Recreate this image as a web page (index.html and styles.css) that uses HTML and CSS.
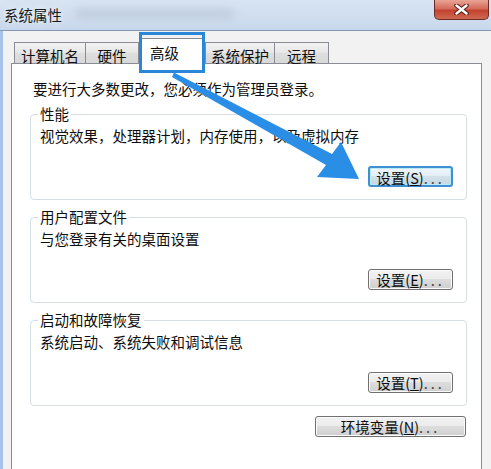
FILE: index.html
```html
<!DOCTYPE html>
<html lang="zh-CN">
<head>
    <meta charset="UTF-8">
    <meta name="viewport" content="width=device-width, initial-scale=1.0">
    <title>系统属性</title>
    <link rel="stylesheet" href="styles.css">
</head>
<body>
    <div class="window">
        <div class="titlebar">
            <span class="title">系统属性</span>
            <span class="title-blur"></span>
            <button class="close" title="关闭">
                <svg width="15" height="11" viewBox="0 0 15 11">
                    <path d="M2.5 1.5 L12.5 9.5 M12.5 1.5 L2.5 9.5" stroke="#5b1d16" stroke-width="4.5" stroke-linecap="round"/>
                    <path d="M2.5 1.5 L12.5 9.5 M12.5 1.5 L2.5 9.5" stroke="#ffffff" stroke-width="2.4" stroke-linecap="round"/>
                </svg>
            </button>
        </div>

        <div class="client">
            <div class="tabs">
                <div class="tab tab-name">计算机名</div>
                <div class="tab tab-hw">硬件</div>
                <div class="tab tab-active">高级<span class="mark"></span></div>
                <div class="tab tab-protect">系统保护</div>
                <div class="tab tab-remote">远程</div>
            </div>

            <div class="panel">
                <p class="intro">要进行大多数更改，您必须作为管理员登录。</p>

                <fieldset class="group">
                    <legend>性能</legend>
                    <p>视觉效果，处理器计划，内存使用，以及虚拟内存</p>
                    <div class="group-actions">
                        <button class="btn btn-default">设置(<u>S</u>)<span class="dots">...</span></button>
                    </div>
                </fieldset>

                <fieldset class="group">
                    <legend>用户配置文件</legend>
                    <p>与您登录有关的桌面设置</p>
                    <div class="group-actions">
                        <button class="btn">设置(<u>E</u>)<span class="dots">...</span></button>
                    </div>
                </fieldset>

                <fieldset class="group">
                    <legend>启动和故障恢复</legend>
                    <p>系统启动、系统失败和调试信息</p>
                    <div class="group-actions">
                        <button class="btn">设置(<u>T</u>)<span class="dots">...</span></button>
                    </div>
                </fieldset>

                <div class="env-row">
                    <button class="btn btn-wide">环境变量(<u>N</u>)<span class="dots">...</span></button>
                </div>
            </div>
        </div>

        <!-- arrow drawn over the dialog -->
        <svg class="arrow" width="491" height="469" viewBox="0 0 491 469">
            <polygon points="174,72.5 332,154 341,142 359,179 317,177 326,165 172,77" fill="#2a8de6"/>
        </svg>
    </div>
</body>
</html>
```

FILE: styles.css
```css
* {
    box-sizing: border-box;
}
body {
    margin: 0;
    width: 491px;
    height: 469px;
    overflow: hidden;
    font-family: "Noto Sans CJK SC", "Liberation Sans", sans-serif;
    font-size: 14.5px;
    color: #0e0e0e;
    background: #f0f0f0;
}
.window {
    position: relative;
    height: 469px;
    display: flex;
    flex-direction: column;
}
.titlebar {
    height: 31px;
    flex: none;
    display: flex;
    align-items: flex-start;
    background: linear-gradient(to bottom, #d8e4f2, #c8d8ec);
    border-bottom: 1px solid #8497b0;
}
.title {
    padding: 5px 0 0 4px;
    font-size: 14.5px;
    line-height: 20px;
    color: #1a1a1a;
    text-shadow: 0 0 6px #ffffff;
}
.title-blur {
    width: 160px;
    height: 9px;
    margin: 9px 0 0 12px;
    background: #aebccc;
    border-radius: 5px;
    filter: blur(4px);
    opacity: 0.55;
}
.close {
    margin-left: auto;
    margin-right: 2px;
    width: 55px;
    height: 20px;
    padding: 0;
    border: 1px solid #6e2a24;
    border-top: none;
    border-radius: 0 0 5px 5px;
    background: linear-gradient(to bottom, #e9a597, #d46c5c 45%, #c2412f 55%, #d06a52);
    display: flex;
    align-items: center;
    justify-content: center;
}
.client {
    flex: 1;
    display: flex;
    flex-direction: column;
    border-left: 3px solid #a8c4eb;
    padding: 7px 9px 0 8px;
    background: #f2f2f2;
}
.tabs {
    position: relative;
    z-index: 1;
    display: flex;
    align-items: flex-end;
    height: 25px;
    margin-left: 3px;
}
.tab {
    height: 21px;
    padding-top: 3px;
    border: 1px solid #898c95;
    border-bottom: none;
    background: linear-gradient(to bottom, #f3f3f3, #e6e6e6 50%, #dedede 51%, #d8d8d8);
    text-align: center;
    line-height: 20px;
    white-space: nowrap;
}
.tab-name {
    width: 72px;
}
.tab-hw {
    width: 54px;
    margin-left: -1px;
}
.tab-active {
    position: relative;
    width: 63px;
    height: 26px;
    margin: 0 1px -1px 2px;
    padding: 4px 0 0 8px;
    background: #ffffff;
    text-align: left;
}
.mark {
    position: absolute;
    left: -3px;
    right: -2px;
    top: -7px;
    bottom: -9px;
    border: 3px solid #2a86d8;
}
.tab-protect {
    width: 70px;
}
.tab-remote {
    width: 55px;
    margin-left: -1px;
}
.panel {
    flex: 1;
    border: 1px solid #898c95;
    border-bottom: none;
    background: #ffffff;
    padding: 0 14px 0 18px;
}
.intro {
    margin: 15px 0 5px;
    padding-left: 3px;
    line-height: 20px;
}
.group {
    margin: 0 0 7px;
    padding: 0 13px 12px 9px;
    border: 1px solid #d5dfe5;
    border-radius: 4px;
    min-width: 0;
}
.group legend {
    padding: 0 2px;
    margin-left: -2px;
    line-height: 20px;
}
.group p {
    margin: 2px 0 0;
    line-height: 20px;
}
.group-actions {
    display: flex;
    justify-content: flex-end;
    margin-top: 20px;
}
.btn {
    width: 85px;
    height: 21px;
    padding: 0;
    border: 1px solid #707070;
    border-radius: 3px;
    background: linear-gradient(to bottom, #f2f2f2 0%, #ebebeb 49%, #dddddd 50%, #cfcfcf 100%);
    box-shadow: inset 0 0 0 1px #fbfbfb;
    font-family: inherit;
    font-size: 14.5px;
    line-height: 19px;
    color: #0e0e0e;
    white-space: nowrap;
}
.btn u {
    text-underline-offset: 1px;
}
.btn .dots {
    letter-spacing: 3px;
    color: #444;
}
.btn-default {
    border: 2px solid #3f8fd2;
    box-shadow: inset 0 0 0 1px #b9ecfb;
    background: linear-gradient(to bottom, #eef6fb 0%, #e2eef6 49%, #d2e1ea 50%, #c7d7e1 100%);
}
.env-row {
    display: flex;
    justify-content: flex-end;
    margin-top: 10px;
}
.btn-wide {
    width: 151px;
    margin-right: 1px;
}
.arrow {
    position: absolute;
    left: 0;
    top: 0;
    pointer-events: none;
}
```
